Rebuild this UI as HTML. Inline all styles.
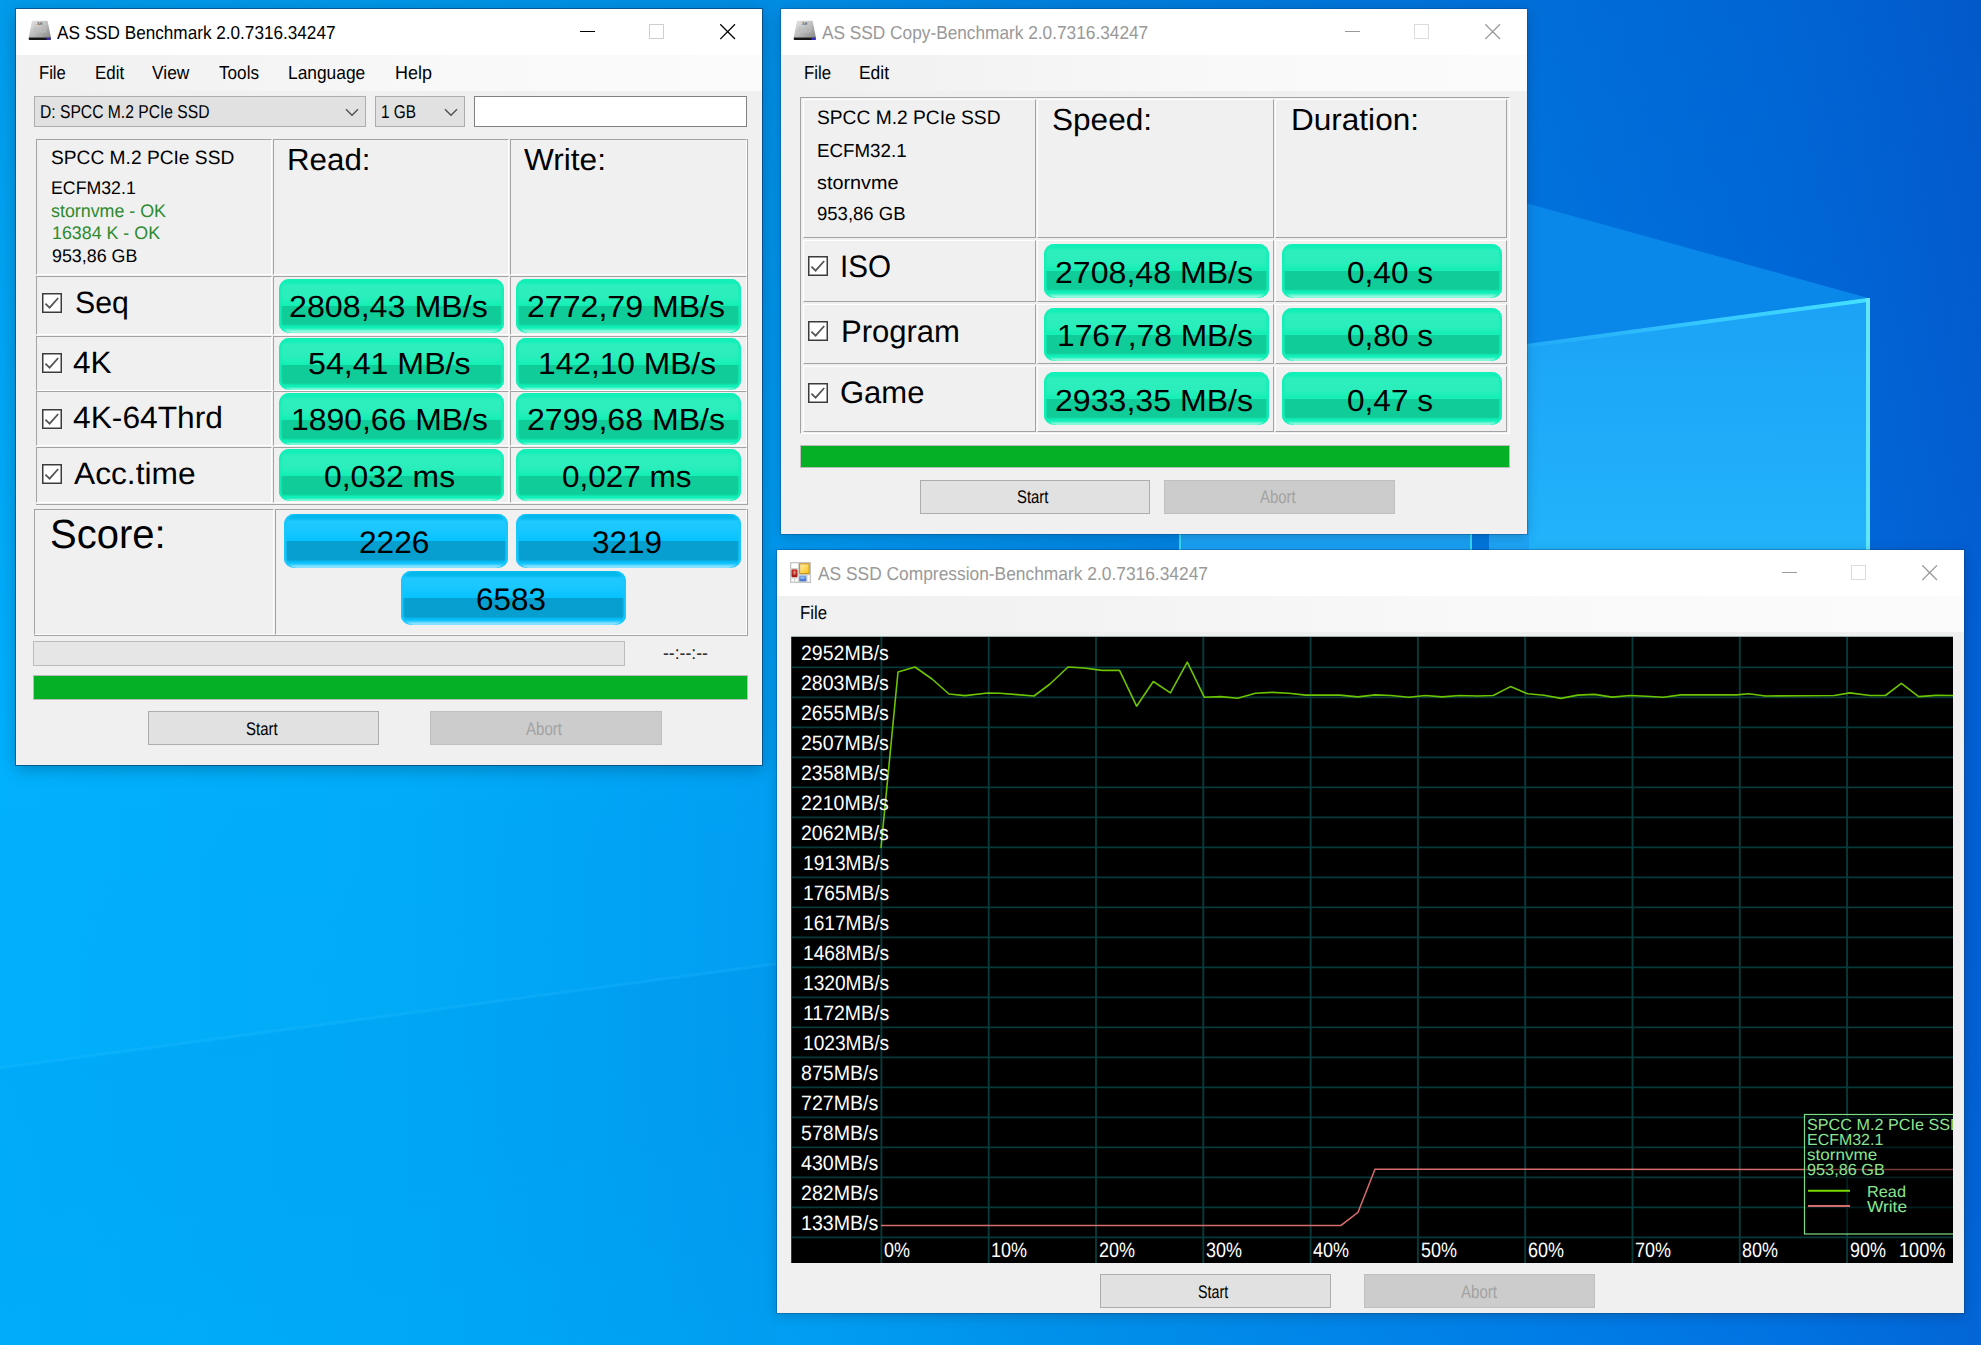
<!DOCTYPE html><html><head><meta charset="utf-8"><title>AS SSD</title><style>
html,body{margin:0;padding:0}
body{width:1981px;height:1345px;position:relative;overflow:hidden;background:#0096eb;font-family:"Liberation Sans",sans-serif}
.a{position:absolute;box-sizing:content-box}
.t{position:absolute;white-space:nowrap;line-height:1;transform-origin:0 0;text-rendering:geometricPrecision;font-family:"Liberation Sans",sans-serif}
.win{position:absolute;background:#f0f0f0}
.w-act{box-shadow:0 0 0 1px rgba(10,50,100,.6),0 4px 16px rgba(0,0,0,.26)}
.w-in{box-shadow:0 0 0 1px rgba(10,50,100,.28),0 3px 12px rgba(0,0,0,.2)}
.tb{position:absolute;left:0;top:0;right:0;height:46px;background:#fff}
.mb{position:absolute;left:0;top:46px;right:0;height:36px;background:linear-gradient(to right,#f0f0f0 0%,#f3f3f3 25%,#f9f9f9 60%,#fbfbfb 100%)}
.cell{border-top:1px solid #a3a3a3;border-left:1px solid #a3a3a3;border-bottom:1px solid #fff;border-right:1px solid #fff}
.cellr{border-top:1px solid #fff;border-left:1px solid #fff;border-bottom:1px solid #a3a3a3;border-right:1px solid #a3a3a3}
.pg{border-radius:10px;background:linear-gradient(to bottom,#12f0b8 0,#12f0b8 3.5px,#2eeebe 6.5px,#2beebc 18px,#14efb5 26.5px,#10cc99 27.5px,#10cc99 45px,#0fefb7 47.5px,#10efb8 49px,#d8fcf2 100%);box-shadow:inset 2.5px 0 1.5px #12f0b8,inset -2.5px 0 1.5px #12f0b8}
.pb{border-radius:10px;background:linear-gradient(to bottom,#05b8ec 0,#05b8ec 4px,#20c8ff 7.5px,#1ac7ff 16px,#05c3ff 26.5px,#069fcf 27.5px,#069fcf 45.5px,#08bdf5 48px,#12c4ff 49.5px,#d0f3ff 100%);box-shadow:inset 2.5px 0 1.5px #18c8ff,inset -2.5px 0 1.5px #18c8ff}
</style></head><body>
<svg class="a" style="left:0;top:0" width="1981" height="1345" viewBox="0 0 1981 1345">
<defs>
<linearGradient id="bgx" x1="0" y1="0" x2="1981" y2="0" gradientUnits="userSpaceOnUse">
<stop offset="0" stop-color="#00b0fd"/><stop offset="0.2" stop-color="#00abf9"/><stop offset="0.39" stop-color="#009ef3"/><stop offset="0.55" stop-color="#008ce8"/><stop offset="0.77" stop-color="#007ae6"/><stop offset="0.9" stop-color="#006ee0"/><stop offset="1" stop-color="#0360d4"/>
</linearGradient>
<linearGradient id="bgy" x1="0" y1="0" x2="0" y2="1345" gradientUnits="userSpaceOnUse">
<stop offset="0" stop-color="#003a9a" stop-opacity="0.18"/><stop offset="0.56" stop-color="#003a9a" stop-opacity="0"/><stop offset="1" stop-color="#00c0ff" stop-opacity="0.06"/>
</linearGradient>
<linearGradient id="pane" x1="0" y1="298" x2="0" y2="560" gradientUnits="userSpaceOnUse">
<stop offset="0" stop-color="#1ba2f6"/><stop offset="1" stop-color="#22b4fb"/>
</linearGradient>
<linearGradient id="edge" x1="1527" y1="0" x2="1868" y2="0" gradientUnits="userSpaceOnUse">
<stop offset="0" stop-color="#2fb8fb" stop-opacity="0.3"/><stop offset="0.5" stop-color="#3ad0ff" stop-opacity="0.8"/><stop offset="1" stop-color="#45e0ff"/>
</linearGradient>
</defs>
<rect width="1981" height="1345" fill="url(#bgx)"/>
<rect width="1981" height="1345" fill="url(#bgy)"/>
<polygon points="0,1066 777,962 777,965 0,1069" fill="#35c4ff" opacity="0.18"/>
<polygon points="0,760 777,760 777,962 0,1066" fill="#10c0ff" opacity="0.05"/>
<polygon points="0,1070 777,966 777,1345 0,1345" fill="#0078d0" opacity="0.06"/>
<polygon points="1400,168 1868,298 1400,361" fill="#0a88ea"/>
<polygon points="1400,361 1868,298 1868,560 1400,560" fill="url(#pane)"/>
<polygon points="1400,361 1868,298 1868,302 1400,365" fill="url(#edge)"/>
<rect x="1866" y="298" width="4" height="262" fill="#63e6fb"/>
<rect x="1180" y="520" width="292" height="40" fill="#1ba2f6"/>
<rect x="1179" y="520" width="2" height="40" fill="#35dcf5"/>
<rect x="1470" y="520" width="2" height="40" fill="#35dcf5"/>
<rect x="1472" y="520" width="17" height="40" fill="#0078e0"/>
<rect x="1489" y="520" width="40" height="40" fill="#1ea6f8"/>
</svg>
<div class="win w-act" style="left:16px;top:9px;width:746px;height:756px"><div class="tb"></div><div class="mb"></div></div>
<svg class="a" style="left:28px;top:20px" width="24" height="21" viewBox="0 0 24 21"><defs><linearGradient id="ig28" x1="0" y1="0" x2="1" y2="1"><stop offset="0" stop-color="#e8e8e8"/><stop offset="0.5" stop-color="#bdbdbd"/><stop offset="1" stop-color="#858585"/></linearGradient></defs><path d="M4 0.8 L19.6 0.8 L23 17.8 L0.6 17.8 Z" fill="url(#ig28)"/><path d="M0.8 17.6 H22.8 V19.2 Q22.8 20 22 20 H1.6 Q0.8 20 0.8 19.2 Z" fill="#151515"/><rect x="18.6" y="17.8" width="3.6" height="2" fill="#3a2fd0"/><text x="11.4" y="4.6" font-family="Liberation Serif" font-size="4.6" font-weight="bold" text-anchor="middle" fill="#4a4a4a">AS</text><text x="11.6" y="11.6" font-family="Liberation Sans" font-size="6.6" font-weight="bold" font-style="italic" text-anchor="middle" fill="#a9a9a9" stroke="#d6d6d6" stroke-width="0.25">SSD</text></svg>
<span class="t" style="left:56.90px;top:24px;font-size:18.75px;color:#000;transform:scaleX(0.9150);">AS SSD Benchmark 2.0.7316.34247</span>
<div class="a" style="left:580px;top:31px;width:15px;height:1px;background:#000"></div>
<div class="a" style="left:649px;top:24px;width:13px;height:13px;border:1px solid #cfcfcf"></div>
<svg class="a" style="left:720px;top:24px" width="16" height="16" viewBox="0 0 16 16"><path d="M0.3 0.3 L15 15 M15 0.3 L0.3 15" stroke="#000" stroke-width="1.3" fill="none"/></svg>
<span class="t" style="left:38.80px;top:64px;font-size:18.75px;color:#000;transform:scaleX(0.8872);">File</span>
<span class="t" style="left:94.50px;top:64px;font-size:18.75px;color:#000;transform:scaleX(0.9008);">Edit</span>
<span class="t" style="left:152.40px;top:64px;font-size:18.75px;color:#000;transform:scaleX(0.9269);">View</span>
<span class="t" style="left:219.00px;top:64px;font-size:18.75px;color:#000;transform:scaleX(0.9140);">Tools</span>
<span class="t" style="left:288.30px;top:64px;font-size:18.75px;color:#000;transform:scaleX(0.9255);">Language</span>
<span class="t" style="left:394.70px;top:64px;font-size:18.75px;color:#000;transform:scaleX(0.9567);">Help</span>
<div class="a" style="left:34px;top:96px;width:330px;height:29px;background:#e1e1e1;border:1px solid #adadad"></div>
<span class="t" style="left:40.40px;top:103px;font-size:18.6px;color:#000;transform:scaleX(0.8415);">D: SPCC M.2 PCIe SSD</span>
<svg class="a" style="left:345px;top:107.5px" width="14" height="9" viewBox="0 0 14 9"><path d="M1 1.2 L7 7.2 L13 1.2" fill="none" stroke="#505050" stroke-width="1.4"/></svg>
<div class="a" style="left:375px;top:96px;width:88px;height:29px;background:#e1e1e1;border:1px solid #adadad"></div>
<span class="t" style="left:381.00px;top:103px;font-size:18.6px;color:#000;transform:scaleX(0.8257);">1 GB</span>
<svg class="a" style="left:444px;top:107.5px" width="14" height="9" viewBox="0 0 14 9"><path d="M1 1.2 L7 7.2 L13 1.2" fill="none" stroke="#505050" stroke-width="1.4"/></svg>
<div class="a" style="left:474px;top:96px;width:271px;height:29px;background:#fff;border:1.5px solid #808080"></div>
<div class="a cell" style="left:36px;top:139px;width:234px;height:134px"></div>
<div class="a cell" style="left:273px;top:139px;width:234px;height:134px"></div>
<div class="a cell" style="left:510px;top:139px;width:235px;height:134px"></div>
<div class="a cell" style="left:36px;top:276px;width:234px;height:57px"></div>
<div class="a cell" style="left:273px;top:276px;width:234px;height:57px"></div>
<div class="a cell" style="left:510px;top:276px;width:235px;height:57px"></div>
<div class="a cell" style="left:36px;top:336px;width:234px;height:53px"></div>
<div class="a cell" style="left:273px;top:336px;width:234px;height:53px"></div>
<div class="a cell" style="left:510px;top:336px;width:235px;height:53px"></div>
<div class="a cell" style="left:36px;top:391px;width:234px;height:53px"></div>
<div class="a cell" style="left:273px;top:391px;width:234px;height:53px"></div>
<div class="a cell" style="left:510px;top:391px;width:235px;height:53px"></div>
<div class="a cell" style="left:36px;top:447px;width:234px;height:54px"></div>
<div class="a cell" style="left:273px;top:447px;width:234px;height:54px"></div>
<div class="a cell" style="left:510px;top:447px;width:235px;height:54px"></div>
<div class="a" style="left:747px;top:139px;width:1px;height:365px;background:#a3a3a3"></div>
<div class="a" style="left:36px;top:503.5px;width:712px;height:1px;background:#a3a3a3"></div>
<div class="a" style="left:747px;top:509px;width:1px;height:127px;background:#a3a3a3"></div>
<div class="a" style="left:34px;top:635px;width:714px;height:1px;background:#a3a3a3"></div>
<span class="t" style="left:50.90px;top:149px;font-size:19.19px;color:#000;transform:scaleX(0.9994);">SPCC M.2 PCIe SSD</span>
<span class="t" style="left:50.90px;top:179px;font-size:18.31px;color:#000;transform:scaleX(0.9691);">ECFM32.1</span>
<span class="t" style="left:50.90px;top:202px;font-size:18.31px;color:#2c8a2c;transform:scaleX(0.9752);">stornvme - OK</span>
<span class="t" style="left:51.90px;top:224px;font-size:18.31px;color:#2c8a2c;transform:scaleX(0.9744);">16384 K - OK</span>
<span class="t" style="left:51.50px;top:247px;font-size:18.31px;color:#000;transform:scaleX(0.9756);">953,86 GB</span>
<span class="t" style="left:287.00px;top:145px;font-size:30.52px;color:#000;transform:scaleX(1.0255);">Read:</span>
<span class="t" style="left:524.00px;top:145px;font-size:30.52px;color:#000;transform:scaleX(1.0362);">Write:</span>
<svg class="a" style="left:41.5px;top:292.5px" width="20" height="20" viewBox="0 0 20 20"><rect x="0.75" y="0.75" width="18.5" height="18.5" fill="#fff" stroke="#3c3c3c" stroke-width="1.5"/><path d="M3.4 10.6 L7.6 14.6 L16.2 5" fill="none" stroke="#555" stroke-width="1.8"/></svg>
<svg class="a" style="left:41.5px;top:353px" width="20" height="20" viewBox="0 0 20 20"><rect x="0.75" y="0.75" width="18.5" height="18.5" fill="#fff" stroke="#3c3c3c" stroke-width="1.5"/><path d="M3.4 10.6 L7.6 14.6 L16.2 5" fill="none" stroke="#555" stroke-width="1.8"/></svg>
<svg class="a" style="left:41.5px;top:408.5px" width="20" height="20" viewBox="0 0 20 20"><rect x="0.75" y="0.75" width="18.5" height="18.5" fill="#fff" stroke="#3c3c3c" stroke-width="1.5"/><path d="M3.4 10.6 L7.6 14.6 L16.2 5" fill="none" stroke="#555" stroke-width="1.8"/></svg>
<svg class="a" style="left:41.5px;top:464px" width="20" height="20" viewBox="0 0 20 20"><rect x="0.75" y="0.75" width="18.5" height="18.5" fill="#fff" stroke="#3c3c3c" stroke-width="1.5"/><path d="M3.4 10.6 L7.6 14.6 L16.2 5" fill="none" stroke="#555" stroke-width="1.8"/></svg>
<span class="t" style="left:74.70px;top:288px;font-size:30.81px;color:#000;transform:scaleX(0.9816);">Seq</span>
<span class="t" style="left:73.00px;top:348px;font-size:30.81px;color:#000;transform:scaleX(1.0244);">4K</span>
<span class="t" style="left:73.00px;top:403px;font-size:30.81px;color:#000;transform:scaleX(1.0304);">4K-64Thrd</span>
<span class="t" style="left:74.00px;top:459px;font-size:30.81px;color:#000;transform:scaleX(1.0294);">Acc.time</span>
<div class="a pg" style="left:279px;top:278.5px;width:225px;height:54px"></div>
<div class="a pg" style="left:516px;top:278.5px;width:225px;height:54px"></div>
<div class="a pg" style="left:279px;top:338px;width:225px;height:51.5px"></div>
<div class="a pg" style="left:516px;top:338px;width:225px;height:51.5px"></div>
<div class="a pg" style="left:279px;top:393.4px;width:225px;height:51.4px"></div>
<div class="a pg" style="left:516px;top:393.4px;width:225px;height:51.4px"></div>
<div class="a pg" style="left:279px;top:449px;width:225px;height:52px"></div>
<div class="a pg" style="left:516px;top:449px;width:225px;height:52px"></div>
<span class="t" style="left:289.40px;top:292px;font-size:30.52px;color:#000;transform:scaleX(1.0557);">2808,43 MB/s</span>
<span class="t" style="left:527.00px;top:292px;font-size:30.52px;color:#000;transform:scaleX(1.0515);">2772,79 MB/s</span>
<span class="t" style="left:307.90px;top:349px;font-size:30.52px;color:#000;transform:scaleX(1.0533);">54,41 MB/s</span>
<span class="t" style="left:538.00px;top:349px;font-size:30.52px;color:#000;transform:scaleX(1.0389);">142,10 MB/s</span>
<span class="t" style="left:291.30px;top:405px;font-size:30.52px;color:#000;transform:scaleX(1.0456);">1890,66 MB/s</span>
<span class="t" style="left:527.00px;top:405px;font-size:30.52px;color:#000;transform:scaleX(1.0515);">2799,68 MB/s</span>
<span class="t" style="left:323.60px;top:462px;font-size:30.52px;color:#000;transform:scaleX(1.0444);">0,032 ms</span>
<span class="t" style="left:562.00px;top:462px;font-size:30.52px;color:#000;transform:scaleX(1.0324);">0,027 ms</span>
<div class="a cell" style="left:34px;top:509px;width:238px;height:124px"></div>
<div class="a cell" style="left:275px;top:509px;width:470px;height:124px"></div>
<span class="t" style="left:50.00px;top:514px;font-size:40.7px;color:#000;transform:scaleX(0.9828);">Score:</span>
<div class="a pb" style="left:283.5px;top:514px;width:224.5px;height:54.4px"></div>
<div class="a pb" style="left:516px;top:514px;width:225px;height:54.4px"></div>
<div class="a pb" style="left:400.5px;top:571.4px;width:225px;height:54px"></div>
<span class="t" style="left:359.00px;top:527px;font-size:31.1px;color:#000;transform:scaleX(1.0188);">2226</span>
<span class="t" style="left:592.00px;top:527px;font-size:31.1px;color:#000;transform:scaleX(1.0116);">3219</span>
<span class="t" style="left:476.00px;top:584px;font-size:31.1px;color:#000;transform:scaleX(1.0116);">6583</span>
<div class="a" style="left:33px;top:641px;width:590px;height:22.5px;background:#e6e6e6;border:1px solid #bcbcbc"></div>
<span class="t" style="left:663.00px;top:644px;font-size:18.31px;color:#222;transform:scaleX(0.9623);">--:--:--</span>
<div class="a" style="left:33px;top:675px;width:712.5px;height:22.5px;background:#06b025;border:1px solid #bcbcbc"></div>
<div class="a" style="left:148px;top:711px;width:229px;height:32px;background:#e1e1e1;border:1px solid #adadad"></div>
<span class="t" style="left:246.00px;top:720px;font-size:18.31px;color:#000;transform:scaleX(0.8172);">Start</span>
<div class="a" style="left:430px;top:711px;width:229.5px;height:32px;background:#cccccc;border:1px solid #bfbfbf"></div>
<span class="t" style="left:526.40px;top:720px;font-size:18.31px;color:#a2a2a2;transform:scaleX(0.8227);">Abort</span>
<div class="win w-in" style="left:781px;top:9px;width:746px;height:524.5px"><div class="tb"></div><div class="mb"></div></div>
<svg class="a" style="left:793px;top:20px" width="24" height="21" viewBox="0 0 24 21"><defs><linearGradient id="ig793" x1="0" y1="0" x2="1" y2="1"><stop offset="0" stop-color="#e8e8e8"/><stop offset="0.5" stop-color="#bdbdbd"/><stop offset="1" stop-color="#858585"/></linearGradient></defs><path d="M4 0.8 L19.6 0.8 L23 17.8 L0.6 17.8 Z" fill="url(#ig793)"/><path d="M0.8 17.6 H22.8 V19.2 Q22.8 20 22 20 H1.6 Q0.8 20 0.8 19.2 Z" fill="#151515"/><rect x="18.6" y="17.8" width="3.6" height="2" fill="#3a2fd0"/><text x="11.4" y="4.6" font-family="Liberation Serif" font-size="4.6" font-weight="bold" text-anchor="middle" fill="#4a4a4a">AS</text><text x="11.6" y="11.6" font-family="Liberation Sans" font-size="6.6" font-weight="bold" font-style="italic" text-anchor="middle" fill="#a9a9a9" stroke="#d6d6d6" stroke-width="0.25">SSD</text></svg>
<span class="t" style="left:822.40px;top:24px;font-size:18.75px;color:#999;transform:scaleX(0.9205);">AS SSD Copy-Benchmark 2.0.7316.34247</span>
<div class="a" style="left:1345px;top:31px;width:15px;height:1px;background:#999"></div>
<div class="a" style="left:1414px;top:24px;width:13px;height:13px;border:1px solid #dcdcdc"></div>
<svg class="a" style="left:1485px;top:24px" width="16" height="16" viewBox="0 0 16 16"><path d="M0.3 0.3 L15 15 M15 0.3 L0.3 15" stroke="#999" stroke-width="1.3" fill="none"/></svg>
<span class="t" style="left:804.00px;top:64px;font-size:18.75px;color:#000;transform:scaleX(0.8939);">File</span>
<span class="t" style="left:859.40px;top:64px;font-size:18.75px;color:#000;transform:scaleX(0.9286);">Edit</span>
<div class="a" style="left:800px;top:97px;width:707.5px;height:334.5px;border-top:1px solid #a3a3a3;border-left:1px solid #a3a3a3;border-right:1px solid #fff;border-bottom:1px solid #fff"></div>
<div class="a cellr" style="left:803px;top:99px;width:231px;height:137px"></div>
<div class="a cellr" style="left:1037px;top:99px;width:235px;height:137px"></div>
<div class="a cellr" style="left:1275px;top:99px;width:230px;height:137px"></div>
<div class="a cellr" style="left:803px;top:240px;width:231px;height:60px"></div>
<div class="a cellr" style="left:1037px;top:240px;width:235px;height:60px"></div>
<div class="a cellr" style="left:1275px;top:240px;width:230px;height:60px"></div>
<div class="a cellr" style="left:803px;top:304px;width:231px;height:58px"></div>
<div class="a cellr" style="left:1037px;top:304px;width:235px;height:58px"></div>
<div class="a cellr" style="left:1275px;top:304px;width:230px;height:58px"></div>
<div class="a cellr" style="left:803px;top:366px;width:231px;height:63.5px"></div>
<div class="a cellr" style="left:1037px;top:366px;width:235px;height:63.5px"></div>
<div class="a cellr" style="left:1275px;top:366px;width:230px;height:63.5px"></div>
<span class="t" style="left:817.40px;top:109px;font-size:19.48px;color:#000;transform:scaleX(0.9861);">SPCC M.2 PCIe SSD</span>
<span class="t" style="left:817.40px;top:143px;font-size:18.9px;color:#000;transform:scaleX(0.9920);">ECFM32.1</span>
<span class="t" style="left:817.40px;top:175px;font-size:18.9px;color:#000;transform:scaleX(1.0500);">stornvme</span>
<span class="t" style="left:817.40px;top:206px;font-size:18.9px;color:#000;transform:scaleX(0.9805);">953,86 GB</span>
<span class="t" style="left:1052.00px;top:105px;font-size:30.52px;color:#000;transform:scaleX(1.0339);">Speed:</span>
<span class="t" style="left:1291.00px;top:105px;font-size:30.52px;color:#000;transform:scaleX(1.0335);">Duration:</span>
<svg class="a" style="left:808px;top:256.4px" width="20" height="20" viewBox="0 0 20 20"><rect x="0.75" y="0.75" width="18.5" height="18.5" fill="#fff" stroke="#3c3c3c" stroke-width="1.5"/><path d="M3.4 10.6 L7.6 14.6 L16.2 5" fill="none" stroke="#555" stroke-width="1.8"/></svg>
<svg class="a" style="left:808px;top:321.4px" width="20" height="20" viewBox="0 0 20 20"><rect x="0.75" y="0.75" width="18.5" height="18.5" fill="#fff" stroke="#3c3c3c" stroke-width="1.5"/><path d="M3.4 10.6 L7.6 14.6 L16.2 5" fill="none" stroke="#555" stroke-width="1.8"/></svg>
<svg class="a" style="left:808px;top:382.6px" width="20" height="20" viewBox="0 0 20 20"><rect x="0.75" y="0.75" width="18.5" height="18.5" fill="#fff" stroke="#3c3c3c" stroke-width="1.5"/><path d="M3.4 10.6 L7.6 14.6 L16.2 5" fill="none" stroke="#555" stroke-width="1.8"/></svg>
<span class="t" style="left:840.00px;top:251px;font-size:31.1px;color:#000;transform:scaleX(0.9518);">ISO</span>
<span class="t" style="left:841.00px;top:316px;font-size:31.1px;color:#000;transform:scaleX(0.9977);">Program</span>
<span class="t" style="left:840.00px;top:377px;font-size:31.1px;color:#000;transform:scaleX(0.9966);">Game</span>
<div class="a pg" style="left:1044px;top:244.4px;width:224.5px;height:53.5px"></div>
<div class="a pg" style="left:1282px;top:244.4px;width:219.5px;height:53.5px"></div>
<div class="a pg" style="left:1044px;top:307.6px;width:224.5px;height:53.5px"></div>
<div class="a pg" style="left:1282px;top:307.6px;width:219.5px;height:53.5px"></div>
<div class="a pg" style="left:1044px;top:371.6px;width:224.5px;height:53.5px"></div>
<div class="a pg" style="left:1282px;top:371.6px;width:219.5px;height:53.5px"></div>
<span class="t" style="left:1055.00px;top:258px;font-size:30.52px;color:#000;transform:scaleX(1.0515);">2708,48 MB/s</span>
<span class="t" style="left:1057.00px;top:321px;font-size:30.52px;color:#000;transform:scaleX(1.0408);">1767,78 MB/s</span>
<span class="t" style="left:1055.00px;top:386px;font-size:30.52px;color:#000;transform:scaleX(1.0515);">2933,35 MB/s</span>
<span class="t" style="left:1347.00px;top:258px;font-size:30.52px;color:#000;transform:scaleX(1.0344);">0,40 s</span>
<span class="t" style="left:1347.00px;top:321px;font-size:30.52px;color:#000;transform:scaleX(1.0344);">0,80 s</span>
<span class="t" style="left:1347.00px;top:386px;font-size:30.52px;color:#000;transform:scaleX(1.0344);">0,47 s</span>
<div class="a" style="left:800px;top:445px;width:707.5px;height:21px;background:#06b025;border:1px solid #bcbcbc"></div>
<div class="a" style="left:919.5px;top:480px;width:228.5px;height:32px;background:#e1e1e1;border:1px solid #adadad"></div>
<span class="t" style="left:1016.90px;top:488px;font-size:18.31px;color:#000;transform:scaleX(0.8120);">Start</span>
<div class="a" style="left:1164px;top:480px;width:228.5px;height:32px;background:#cccccc;border:1px solid #bfbfbf"></div>
<span class="t" style="left:1260.00px;top:488px;font-size:18.31px;color:#a2a2a2;transform:scaleX(0.8135);">Abort</span>
<div class="win w-in" style="left:777px;top:550px;width:1187px;height:762.5px"><div class="tb"></div><div class="mb"></div></div>
<svg class="a" style="left:790px;top:561.5px" width="21" height="21" viewBox="0 0 21 21"><defs><linearGradient id="cy" x1="0" y1="0" x2="1" y2="1"><stop offset="0" stop-color="#ffeeb0"/><stop offset="1" stop-color="#fbc010"/></linearGradient><linearGradient id="cr" x1="0" y1="0" x2="0" y2="1"><stop offset="0" stop-color="#cc3a20"/><stop offset="1" stop-color="#a01818"/></linearGradient><linearGradient id="cb" x1="0" y1="0" x2="0" y2="1"><stop offset="0" stop-color="#7aaae8"/><stop offset="1" stop-color="#3c6cc8"/></linearGradient></defs><rect x="0.65" y="0.65" width="19.7" height="19.7" fill="#fff" stroke="#c4c4c4" stroke-width="1.3"/><path d="M8.5 0.6 V20.4 M0.6 6.6 H8.5 M0.6 16 H8.5 M4.7 16 V20.4 M8.5 12.6 H20.4 M17 12.6 V20.4" stroke="#d2d2d2" stroke-width="1.2" fill="none"/><rect x="9.6" y="1.8" width="9.6" height="9.8" fill="url(#cy)" stroke="#c4961a" stroke-width="1.1"/><rect x="1.8" y="7.7" width="5.4" height="7.2" rx="0.6" fill="url(#cr)" stroke="#a82418" stroke-width="0.6"/><ellipse cx="4.5" cy="10.8" rx="1.2" ry="2" fill="#f0a0a0" opacity="0.8"/><rect x="9.2" y="13.4" width="7.2" height="6" fill="url(#cb)"/><ellipse cx="12.4" cy="15.8" rx="2.2" ry="1.2" fill="#a0c4ff" opacity="0.7"/></svg>
<span class="t" style="left:818.20px;top:565px;font-size:18.75px;color:#999;transform:scaleX(0.9262);">AS SSD Compression-Benchmark 2.0.7316.34247</span>
<div class="a" style="left:1782px;top:572px;width:15px;height:1px;background:#999"></div>
<div class="a" style="left:1851px;top:565px;width:13px;height:13px;border:1px solid #dcdcdc"></div>
<svg class="a" style="left:1922px;top:565px" width="16" height="16" viewBox="0 0 16 16"><path d="M0.3 0.3 L15 15 M15 0.3 L0.3 15" stroke="#999" stroke-width="1.3" fill="none"/></svg>
<span class="t" style="left:800.00px;top:604px;font-size:18.75px;color:#000;transform:scaleX(0.8939);">File</span>
<div class="a" style="left:791px;top:636px;width:1162.4px;height:1px;background:#9fb0b0"></div>
<div class="a" style="left:791px;top:637px;width:1162.4px;height:626px;background:#000"></div>
<svg class="a" style="left:791px;top:637px" width="1162.4" height="626" viewBox="791 637 1162.4 626"><path d="M791 667.4 H1953.4 M791 697.4 H1953.4 M791 727.4 H1953.4 M791 757.4 H1953.4 M791 787.4 H1953.4 M791 817.4 H1953.4 M791 847.4 H1953.4 M791 877.4 H1953.4 M791 907.4 H1953.4 M791 937.4 H1953.4 M791 967.4 H1953.4 M791 997.4 H1953.4 M791 1027.4 H1953.4 M791 1057.4 H1953.4 M791 1087.4 H1953.4 M791 1117.4 H1953.4 M791 1147.4 H1953.4 M791 1177.4 H1953.4 M791 1207.4 H1953.4 M791 1237.4 H1953.4 M881.4 637 V1263 M988.7 637 V1263 M1096.0 637 V1263 M1203.3 637 V1263 M1310.6 637 V1263 M1417.9 637 V1263 M1525.2 637 V1263 M1632.5 637 V1263 M1739.8 637 V1263 M1847.1 637 V1263" stroke="#073a3a" stroke-width="1.9" fill="none"/><path d="M791.5 637 V1263" stroke="#3a3a3a" stroke-width="1"/><polyline fill="none" stroke="#d86c6c" stroke-width="1.5" points="881,1225.4 1341,1225.4 1358,1212.4 1375,1169.2 1953.4,1169.6"/><polyline fill="none" stroke="#6cc400" stroke-width="1.6" stroke-linejoin="round" points="881,848 898,672 915,667 932,679 949,694 965,695.6 988,693 1000,693.2 1017,694.6 1034,696 1050,684 1068,667 1084,668 1102,670.4 1119.5,670.4 1136.6,706.2 1153.3,681.5 1170.4,692.9 1187.3,662.2 1204.4,697.3 1221,696.6 1237.7,698.2 1255.5,693.3 1272.1,692.4 1288.8,693.3 1305.5,695.1 1339.9,695.1 1357.7,696.9 1375.4,694.9 1391,695.5 1408.8,697.3 1425.4,695.5 1442.1,696.9 1459.8,695.5 1477.6,696 1493.2,695.5 1510.5,686.6 1527.6,693.8 1544,695.3 1561,698.4 1577.8,695.1 1594.4,694.4 1612.2,697.1 1630,695.5 1646,696.2 1663.3,697.3 1681,694.9 1736.6,694.9 1748.8,693.8 1765.4,696 1834.3,695.5 1849.9,692.9 1869.9,695.5 1885.4,695.5 1901.4,683.3 1918.7,696.6 1936,695.4 1953.4,695.5"/><rect x="1804.5" y="1114.5" width="160" height="119.5" fill="rgba(0,0,0,0.45)" stroke="#7fdc86" stroke-width="1.2"/><path d="M1808 1190.7 H1850" stroke="#78dc00" stroke-width="2"/><path d="M1808 1205.9 H1850" stroke="#d86c6c" stroke-width="2"/></svg>
<span class="t" style="left:800.90px;top:644px;font-size:20.78px;color:#fff;transform:scaleX(0.9396);">2952MB/s</span>
<span class="t" style="left:800.90px;top:674px;font-size:20.78px;color:#fff;transform:scaleX(0.9396);">2803MB/s</span>
<span class="t" style="left:800.90px;top:704px;font-size:20.78px;color:#fff;transform:scaleX(0.9396);">2655MB/s</span>
<span class="t" style="left:800.90px;top:734px;font-size:20.78px;color:#fff;transform:scaleX(0.9396);">2507MB/s</span>
<span class="t" style="left:800.90px;top:764px;font-size:20.78px;color:#fff;transform:scaleX(0.9396);">2358MB/s</span>
<span class="t" style="left:800.90px;top:794px;font-size:20.78px;color:#fff;transform:scaleX(0.9396);">2210MB/s</span>
<span class="t" style="left:800.90px;top:824px;font-size:20.78px;color:#fff;transform:scaleX(0.9396);">2062MB/s</span>
<span class="t" style="left:802.60px;top:854px;font-size:20.78px;color:#fff;transform:scaleX(0.9214);">1913MB/s</span>
<span class="t" style="left:802.60px;top:884px;font-size:20.78px;color:#fff;transform:scaleX(0.9214);">1765MB/s</span>
<span class="t" style="left:802.60px;top:914px;font-size:20.78px;color:#fff;transform:scaleX(0.9214);">1617MB/s</span>
<span class="t" style="left:802.60px;top:944px;font-size:20.78px;color:#fff;transform:scaleX(0.9214);">1468MB/s</span>
<span class="t" style="left:802.60px;top:974px;font-size:20.78px;color:#fff;transform:scaleX(0.9214);">1320MB/s</span>
<span class="t" style="left:802.60px;top:1004px;font-size:20.78px;color:#fff;transform:scaleX(0.9368);">1172MB/s</span>
<span class="t" style="left:802.60px;top:1034px;font-size:20.78px;color:#fff;transform:scaleX(0.9214);">1023MB/s</span>
<span class="t" style="left:801.30px;top:1064px;font-size:20.78px;color:#fff;transform:scaleX(0.9427);">875MB/s</span>
<span class="t" style="left:801.30px;top:1094px;font-size:20.78px;color:#fff;transform:scaleX(0.9427);">727MB/s</span>
<span class="t" style="left:801.30px;top:1124px;font-size:20.78px;color:#fff;transform:scaleX(0.9427);">578MB/s</span>
<span class="t" style="left:801.30px;top:1154px;font-size:20.78px;color:#fff;transform:scaleX(0.9427);">430MB/s</span>
<span class="t" style="left:801.30px;top:1184px;font-size:20.78px;color:#fff;transform:scaleX(0.9427);">282MB/s</span>
<span class="t" style="left:801.30px;top:1214px;font-size:20.78px;color:#fff;transform:scaleX(0.9427);">133MB/s</span>
<span class="t" style="left:884.00px;top:1241px;font-size:20.78px;color:#fff;transform:scaleX(0.8659);">0%</span>
<span class="t" style="left:991.30px;top:1241px;font-size:20.78px;color:#fff;transform:scaleX(0.8658);">10%</span>
<span class="t" style="left:1098.60px;top:1241px;font-size:20.78px;color:#fff;transform:scaleX(0.8658);">20%</span>
<span class="t" style="left:1205.90px;top:1241px;font-size:20.78px;color:#fff;transform:scaleX(0.8658);">30%</span>
<span class="t" style="left:1313.20px;top:1241px;font-size:20.78px;color:#fff;transform:scaleX(0.8658);">40%</span>
<span class="t" style="left:1420.50px;top:1241px;font-size:20.78px;color:#fff;transform:scaleX(0.8658);">50%</span>
<span class="t" style="left:1527.80px;top:1241px;font-size:20.78px;color:#fff;transform:scaleX(0.8658);">60%</span>
<span class="t" style="left:1635.10px;top:1241px;font-size:20.78px;color:#fff;transform:scaleX(0.8658);">70%</span>
<span class="t" style="left:1742.40px;top:1241px;font-size:20.78px;color:#fff;transform:scaleX(0.8658);">80%</span>
<span class="t" style="left:1849.70px;top:1241px;font-size:20.78px;color:#fff;transform:scaleX(0.8658);">90%</span>
<span class="t" style="left:1898.50px;top:1241px;font-size:20.78px;color:#fff;transform:scaleX(0.8748);">100%</span>
<div class="a" style="left:1805px;top:1115px;width:148.4000000000001px;height:118px;overflow:hidden">
<span class="t" style="left:1.80px;top:3px;font-size:15.99px;color:#8be48f;transform:scaleX(1.0122);">SPCC M.2 PCIe SSD</span>
<span class="t" style="left:1.80px;top:18px;font-size:15.99px;color:#8be48f;transform:scaleX(0.9985);">ECFM32.1</span>
<span class="t" style="left:1.80px;top:33px;font-size:15.99px;color:#8be48f;transform:scaleX(1.0677);">stornvme</span>
<span class="t" style="left:1.80px;top:48px;font-size:15.99px;color:#8be48f;transform:scaleX(1.0177);">953,86 GB</span>
<span class="t" style="left:62.00px;top:70px;font-size:15.99px;color:#8be48f;transform:scaleX(1.0201);">Read</span>
<span class="t" style="left:62.00px;top:85px;font-size:15.99px;color:#8be48f;transform:scaleX(1.0806);">Write</span>
</div>
<div class="a" style="left:1100px;top:1274px;width:228.5px;height:32px;background:#e1e1e1;border:1px solid #adadad"></div>
<span class="t" style="left:1197.80px;top:1283px;font-size:18.31px;color:#000;transform:scaleX(0.7810);">Start</span>
<div class="a" style="left:1364px;top:1274px;width:228.6px;height:32px;background:#cccccc;border:1px solid #bfbfbf"></div>
<span class="t" style="left:1461.30px;top:1283px;font-size:18.31px;color:#a2a2a2;transform:scaleX(0.8227);">Abort</span>
</body></html>
